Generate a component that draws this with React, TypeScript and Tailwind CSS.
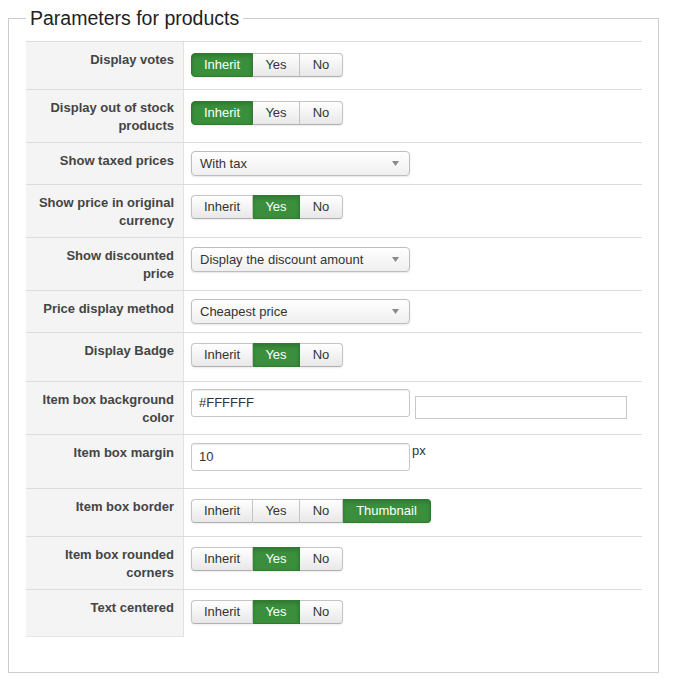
import React from "react";

type Row = {
    label: string;
    h: string;
    pt: string;
    kind: "btn" | "select" | "color" | "margin";
    options?: string[];
    active?: string;
    value?: string;
};

const rows: Row[] = [
    { label: "Display votes", h: "h-[48px]", pt: "pt-[10px]", kind: "btn", options: ["Inherit", "Yes", "No"], active: "Inherit" },
    { label: "Display out of stock products", h: "h-[53px]", pt: "pt-[10px]", kind: "btn", options: ["Inherit", "Yes", "No"], active: "Inherit" },
    { label: "Show taxed prices", h: "h-[42px]", pt: "pt-[8px]", kind: "select", value: "With tax" },
    { label: "Show price in original currency", h: "h-[53px]", pt: "pt-[9px]", kind: "btn", options: ["Inherit", "Yes", "No"], active: "Yes" },
    { label: "Show discounted price", h: "h-[53px]", pt: "pt-[9px]", kind: "select", value: "Display the discount amount" },
    { label: "Price display method", h: "h-[42px]", pt: "pt-[8px]", kind: "select", value: "Cheapest price" },
    { label: "Display Badge", h: "h-[49px]", pt: "pt-[9px]", kind: "btn", options: ["Inherit", "Yes", "No"], active: "Yes" },
    { label: "Item box background color", h: "h-[53px]", pt: "pt-[7px]", kind: "color", value: "#FFFFFF" },
    { label: "Item box margin", h: "h-[54px]", pt: "pt-[8px]", kind: "margin", value: "10" },
    { label: "Item box border", h: "h-[48px]", pt: "pt-[9px]", kind: "btn", options: ["Inherit", "Yes", "No", "Thumbnail"], active: "Thumbnail" },
    { label: "Item box rounded corners", h: "h-[53px]", pt: "pt-[9px]", kind: "btn", options: ["Inherit", "Yes", "No"], active: "Yes" },
    { label: "Text centered", h: "h-[48px]", pt: "pt-[9px]", kind: "btn", options: ["Inherit", "Yes", "No"], active: "Yes" },
];

const widths: Record<string, string> = {
    Inherit: "w-[62px]",
    Yes: "w-[47px]",
    No: "w-[43px]",
    Thumbnail: "w-[88px]",
};

function ButtonGroup({ options, active }: { options: string[]; active?: string }) {
    return (
        <div className="inline-flex shadow-[0_1px_2px_rgba(0,0,0,0.08)] rounded-[4px]">
            {options.map((opt, i) => {
                const on = opt === active;
                const first = i === 0;
                const last = i === options.length - 1;
                return (
                    <div
                        key={opt}
                        className={
                            "h-[24px] flex items-center justify-center text-[13px] border " +
                            widths[opt] +
                            (first ? " rounded-l-[4px]" : " border-l-0") +
                            (last ? " rounded-r-[4px]" : "") +
                            (on
                                ? " bg-[#3b8f3c] border-[#2f7a30] text-white shadow-[inset_0_2px_4px_rgba(0,0,0,0.18)]"
                                : " bg-linear-to-b from-white to-[#e8e8e8] border-[#c4c4c4] border-b-[#b0b0b0] text-[#333]")
                        }
                    >
                        {opt}
                    </div>
                );
            })}
        </div>
    );
}

function FakeSelect({ value }: { value?: string }) {
    return (
        <div className="w-[219px] h-[25px] flex items-center justify-between pl-[8px] pr-[10px] text-[13px] text-[#333] rounded-[4px] border border-[#bdbdbd] bg-linear-to-b from-white to-[#efefef] shadow-[0_1px_2px_rgba(0,0,0,0.1)]">
            <span>{value}</span>
            <svg width="7" height="5" viewBox="0 0 7 5">
                <path d="M0 0 L7 0 L3.5 5 Z" fill="#8a8a8a" />
            </svg>
        </div>
    );
}

function TextBox({ value, w }: { value?: string; w: string }) {
    return (
        <div className={"h-[28px] flex items-center pl-[7px] text-[13px] text-[#333] bg-white border border-[#c8c8c8] rounded-[3px] shadow-[inset_0_1px_1px_rgba(0,0,0,0.08)] " + w}>
            {value}
        </div>
    );
}

export default function App() {
    return (
        <div className="w-[681px] h-[681px] bg-white pt-[8px] pl-[8px]" style={{ fontFamily: '"Liberation Sans", Arial, sans-serif' }}>
            <fieldset className="w-[651px] border border-[#cccccc] pl-[17px] pr-[16px] pb-[35px]">
                <legend className="px-[4px] text-[19.5px] leading-[20px] text-[#222]">Parameters for products</legend>

                <div className="mt-[13px] w-[616px]">
                    {rows.map((row, idx) => (
                        <div key={row.label} className={"flex border-t border-[#dcdcdc] " + row.h}>
                            <div
                                className={
                                    "w-[158px] shrink-0 bg-[#f4f4f4] border-r border-[#e2e2e2] pt-[9px] pl-[12px] pr-[9px] text-right text-[13px] leading-[18px] font-bold text-[#444]" +
                                    (idx === rows.length - 1 ? " border-b border-b-[#e6e6e6]" : "")
                                }
                            >
                                {row.label}
                            </div>
                            <div className={"flex-1 pl-[7px] " + row.pt}>
                                {row.kind === "btn" && <ButtonGroup options={row.options!} active={row.active} />}
                                {row.kind === "select" && <FakeSelect value={row.value} />}
                                {row.kind === "color" && (
                                    <div className="flex items-start gap-[5px]">
                                        <TextBox value={row.value} w="w-[219px]" />
                                        <div className="mt-[7px] w-[212px] h-[23px] border border-[#c8c8c8] bg-white" />
                                    </div>
                                )}
                                {row.kind === "margin" && (
                                    <div className="flex items-start">
                                        <TextBox value={row.value} w="w-[219px]" />
                                        <span className="ml-[2px] text-[13px] leading-[13px] mt-[1px] text-[#333]">px</span>
                                    </div>
                                )}
                            </div>
                        </div>
                    ))}
                </div>
            </fieldset>
        </div>
    );
}
